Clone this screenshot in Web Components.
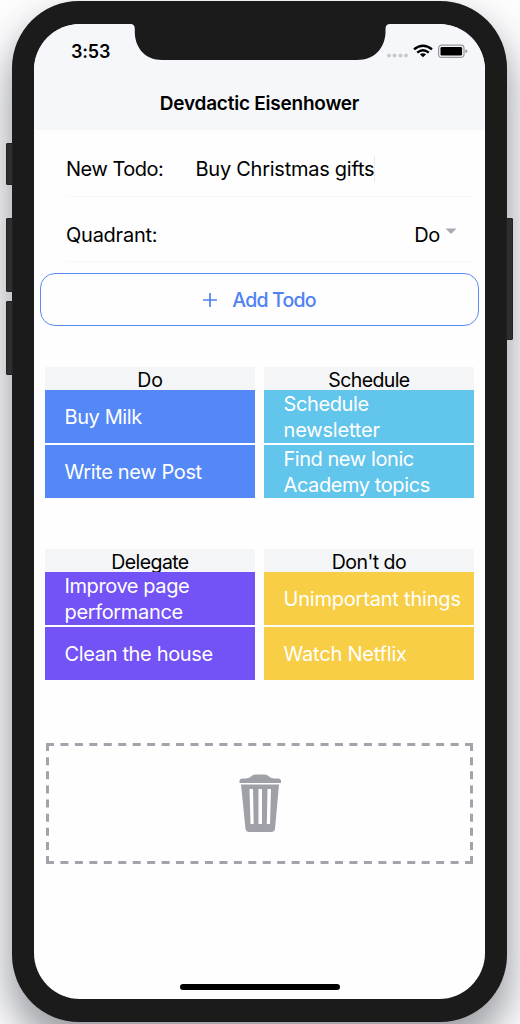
<!DOCTYPE html>
<html lang="en">
<head>
<meta charset="utf-8">
<title>Devdactic Eisenhower</title>
<style>
html,body{margin:0;height:1024px;overflow:hidden;background:#fdfdfe;font-family:Inter,"Liberation Sans",sans-serif;color:#000}
</style>
</head>
<body>
<phone-frame>
  <status-bar></status-bar>
  <app-header><fit-text w="199">Devdactic Eisenhower</fit-text></app-header>
  <form-item tall><fit-text w="97">New Todo:</fit-text><text-value slot="value"><fit-text w="178.5">Buy Christmas gifts</fit-text></text-value></form-item>
  <form-item><fit-text w="91">Quadrant:</fit-text><select-value slot="end"><fit-text w="25.5">Do</fit-text></select-value></form-item>
  <add-button><fit-text w="83">Add Todo</fit-text></add-button>
  <todo-matrix>
    <todo-quadrant color="#5488f7"><fit-text slot="title" w="25">Do</fit-text>
      <todo-item><fit-text w="77">Buy Milk</fit-text></todo-item>
      <todo-item><fit-text w="137">Write new Post</fit-text></todo-item></todo-quadrant>
    <todo-quadrant color="#62c5eb"><fit-text slot="title" w="81">Schedule</fit-text>
      <todo-item><fit-text w="85">Schedule</fit-text><fit-text w="96">newsletter</fit-text></todo-item>
      <todo-item><fit-text w="130">Find new Ionic</fit-text><fit-text w="146">Academy topics</fit-text></todo-item></todo-quadrant>
    <todo-quadrant color="#7352f6"><fit-text slot="title" w="77">Delegate</fit-text>
      <todo-item><fit-text w="124.5">Improve page</fit-text><fit-text w="118">performance</fit-text></todo-item>
      <todo-item><fit-text w="148">Clean the house</fit-text></todo-item></todo-quadrant>
    <todo-quadrant color="#f7ce46"><fit-text slot="title" w="74">Don't do</fit-text>
      <todo-item><fit-text w="177">Unimportant things</fit-text></todo-item>
      <todo-item><fit-text w="123">Watch Netflix</fit-text></todo-item></todo-quadrant>
  </todo-matrix>
  <trash-zone></trash-zone>
</phone-frame>
<script>
const define = (name, html, ready) => customElements.define(name, class extends HTMLElement {
  connectedCallback() {
    if (!this.shadowRoot) this.attachShadow({mode: 'open'}).innerHTML = html;
    if (ready) ready(this);
  }
});

define('phone-frame', `
<style>
:host{display:block;position:relative;box-sizing:border-box;width:495px;height:1021px;margin:1px 0 0 12px;padding:23px 22px;background:#1b1b1b;border-radius:67px;box-shadow:0 22px 38px 3px rgba(40,44,55,.46)}
.screen{display:flex;flex-direction:column;box-sizing:border-box;width:451px;height:975px;background:#fefefe;border-radius:46px;overflow:hidden}
.key{position:absolute;left:-6px;width:7px;background:#2e2e2e;border-radius:2px 0 0 2px;box-shadow:inset 0 0 0 1px #222}
.r{left:494px;border-radius:0 2px 2px 0}
.home{position:absolute;left:167.500px;top:983px;width:160.500px;height:6px;border-radius:3px;background:#000}
.notch{position:absolute;left:118px;top:22px}
</style>
<i class="key" style="top:142px;height:42px"></i><i class="key" style="top:217px;height:74px"></i><i class="key" style="top:300px;height:74px"></i><i class="key r" style="top:217px;height:122px"></i>
<div class="screen"><slot></slot></div>
<svg class="notch" width="260" height="38" viewBox="0 0 260 38"><path fill="#1b1b1b" d="M0 0H260V1C257 1 255.500 2.500 255.500 6V10C254.500 26 244 37 227 37H32C16 37 5.500 26 4.800 10V6C4.800 2.500 3.500 1 0 1Z"/></svg>
<div class="home"></div>`);

define('status-bar', `
<style>
:host{display:flex;flex:none;box-sizing:border-box;height:54px;background:#f6f7fa;padding:0 17px 0 37px;justify-content:space-between;align-items:center;font-weight:600;font-size:18px}
span{letter-spacing:-.2px}
</style>
<span>3:53</span>
<svg width="82" height="20" viewBox="0 0 82 20"><g fill="#c9cacd"><circle cx="3" cy="14.500" r="2"/><circle cx="8.500" cy="14.500" r="2"/><circle cx="14.500" cy="14.500" r="2"/><circle cx="20" cy="14.500" r="2"/></g>
<g fill="none" stroke="#000" stroke-width="2.400"><path d="M28 8.200Q37 1.200 46 8.200"/><path d="M31.200 11.600Q37 7 42.800 11.600"/></g><path d="M33.900 13.300Q37 11.200 40.100 13.300L37 16.300Z"/>
<rect x="52.600" y="4.100" width="25.400" height="12.300" rx="3.200" fill="none" stroke="#97999c" stroke-width="1.200"/><rect x="54.500" y="6" width="21.600" height="8.500" rx="1.300"/><path d="M79.300 8.200Q81.300 8.800 81.300 10.200Q81.300 11.700 79.300 12.300Z" fill="#97999c"/></svg>`);

define('app-header', `<style>:host{display:flex;flex:none;height:51.500px;background:#f6f7fa;align-items:center;justify-content:center;font-size:19px;font-weight:600}</style><slot></slot>`);

define('form-item', `
<style>
:host{display:flex;flex:none;box-sizing:border-box;height:65px;margin:0 12px 0 32px;padding:12px 16px 0 0;align-items:center;font-size:20px;border-bottom:1px solid #f7f7f9}
:host([tall]){height:67px}
.label{width:129.500px}.end{margin-left:auto}
</style><div class="label"><slot></slot></div><slot name="value"></slot><div class="end"><slot name="end"></slot></div>`);

define('text-value', `<style>:host{display:flex;align-items:center}i{width:1px;height:26px;background:#e8e9ee}</style><slot></slot><i></i>`);

define('select-value', `<style>:host{display:flex;align-items:center;gap:5px}svg{margin-top:-6px}</style><slot></slot><svg width="12" height="7"><path d="M.500 .500H11.500L6 6Z" fill="#a7abb2"/></svg>`);

define('add-button', `
<style>
:host{display:flex;flex:none;box-sizing:border-box;width:439px;height:53px;margin:11.500px 0 0 6px;border:1.500px solid #5a8cf5;border-radius:15px;align-items:center;justify-content:center;gap:15px;font-size:19.500px;font-weight:450;color:#4f82f3}
</style><svg width="14" height="14"><path d="M7 0V14M0 7H14" stroke="currentColor" stroke-width="1.700"/></svg><slot></slot>`);

define('todo-matrix', `<style>:host{display:grid;flex:none;grid-template-columns:210px 210px;column-gap:9px;row-gap:51px;margin:41px 0 0 11px}</style><slot></slot>`);

define('todo-quadrant', `
<style>
:host{display:block;min-width:0}
.head{display:flex;height:23px;line-height:26px;justify-content:center;font-size:19.500px;background:#f4f5f7}
.list{display:grid;grid-template:53px 53px / 210px;gap:2px}
::slotted(todo-item){background:var(--fill)}
</style><div class="head"><slot name="title"></slot></div><div class="list"><slot></slot></div>`, el => el.style.setProperty('--fill', el.getAttribute('color')));

define('todo-item', `<style>:host{display:flex;flex-direction:column;justify-content:center;padding-left:19.500px;color:#fff;font-size:20px;line-height:26px}</style><slot></slot>`);

define('trash-zone', `
<style>:host{display:block;flex:none;margin:63px 0 0 12px;height:121px}svg{display:block}</style>
<svg width="427" height="121" viewBox="0 0 427 121"><g fill="none" stroke="#a2a4ab" stroke-width="3"><path stroke-dasharray="8 6.450" d="M0 1.500H427M0 119.500H427"/><path stroke-dasharray="8 6.125" d="M1.500 0V121M425.500 0V121"/></g>
<g fill="#a0a1a8"><path d="M193.500 40V38Q193.500 35.500 196.500 35.500H199.500Q203 35.300 205 33.500Q207 31.500 209.500 31.500H218.500Q221 31.500 223 33.500Q225 35.300 228 35.500H232Q235 35.500 235 38V40Z"/><path fill-rule="evenodd" d="M195 41.500H233L229 86Q228.500 89 225 89H203.500Q200 89 199.500 86ZM203.500 46L204.500 81H207.700L207 46ZM212.500 46V81H216V46ZM221.500 46L220.800 81H224L225 46Z"/></g></svg>`);

// Registered last: it measures its text, which needs the fonts its hosts set.
define('fit-text', `<style>:host{display:block;white-space:nowrap;width:max-content}</style><slot></slot>`, el => {
  const range = document.createRange();
  range.selectNodeContents(el);
  const gap = (+el.getAttribute('w') - range.getBoundingClientRect().width + .3) / el.textContent.length;
  el.style.letterSpacing = gap.toFixed(3) + 'px';
});
</script>
</body>
</html>
